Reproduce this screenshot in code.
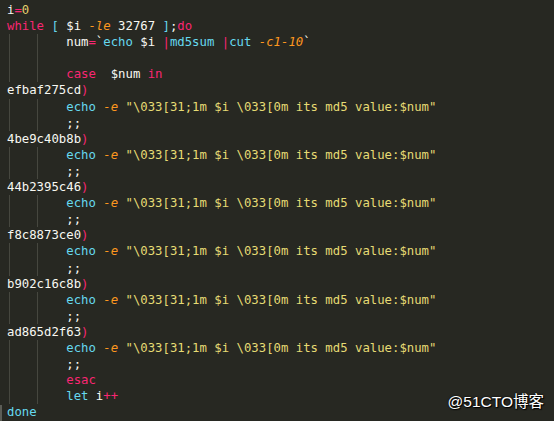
import React from "react";

type Tok = [string, string];

const W = "text-[#f8f8f2]";
const P = "text-[#f92672]";
const B = "text-[#66d9ef]";
const O = "text-[#fd971f] italic";
const Y = "text-[#e6db74]";
const N = "text-[#e2cf6e]";

const TAB = "        ";

const echoLine: Tok[] = [
  [TAB, W],
  ["echo", B],
  [" ", W],
  ["-e", O],
  [" ", W],
  ['"\\033[31;1m $i \\033[0m its md5 value:$num"', Y],
];

const caseLabel = (hash: string): Tok[] => [
  [hash, W],
  [")", P],
];

const semi: Tok[] = [[TAB + ";;", W]];

const lines: { toks: Tok[]; guide?: boolean; cursor?: boolean }[] = [
  { toks: [["i", W], ["=", P], ["0", N]] },
  {
    toks: [
      ["while", P],
      [" ", W],
      ["[", B],
      [" $i ", W],
      ["-le", O],
      [" 32767 ", W],
      ["]", B],
      [";", W],
      ["do", P],
    ],
  },
  {
    guide: true,
    toks: [
      [TAB + "num", W],
      ["=", P],
      ["`", W],
      ["echo", B],
      [" $i ", W],
      ["|", P],
      ["md5sum", B],
      [" ", W],
      ["|", P],
      ["cut", B],
      [" ", W],
      ["-c1-10", O],
      ["`", W],
    ],
  },
  { guide: true, toks: [["", W]] },
  { guide: true, toks: [[TAB, W], ["case", P], ["  $num ", W], ["in", P]] },
  { toks: caseLabel("efbaf275cd") },
  { guide: true, toks: echoLine },
  { guide: true, toks: semi },
  { toks: caseLabel("4be9c40b8b") },
  { guide: true, toks: echoLine },
  { guide: true, toks: semi },
  { toks: caseLabel("44b2395c46") },
  { guide: true, toks: echoLine },
  { guide: true, toks: semi },
  { toks: caseLabel("f8c8873ce0") },
  { guide: true, toks: echoLine },
  { guide: true, toks: semi },
  { toks: caseLabel("b902c16c8b") },
  { guide: true, toks: echoLine },
  { guide: true, toks: semi },
  { toks: caseLabel("ad865d2f63") },
  { guide: true, toks: echoLine },
  { guide: true, toks: semi },
  { guide: true, toks: [[TAB, W], ["esac", P]] },
  { guide: true, toks: [[TAB, W], ["let", B], [" i", W], ["++", P]] },
  { cursor: true, toks: [["done", B]] },
];

export default function App() {
  return (
    <div className="relative w-[554px] h-[421px] overflow-hidden bg-[#272822]">
      <div
        className="pt-[2px] pl-[7px] text-[12.3px] leading-[16.1px] whitespace-pre"
        style={{ fontFamily: '"DejaVu Sans Mono", monospace' }}
      >
        {lines.map((ln, i) => (
          <div key={i} className="relative h-[16.1px]">
            {ln.guide && (
              <>
                <span className="absolute left-[2px] top-0 h-full w-px bg-[#46473f]" />
                <span className="absolute left-[30px] top-0 h-full w-px bg-[#46473f]" />
              </>
            )}
            {ln.cursor && (
              <span className="absolute left-[-7px] top-[1px] h-[17px] w-[2px] bg-[#5c5d56]" />
            )}
            {ln.toks.map(([t, c], j) => (
              <span key={j} className={c}>
                {t}
              </span>
            ))}
          </div>
        ))}
      </div>

      {/* watermark */}
      <div
        className="absolute right-[10px] bottom-[8px] text-[15.5px] text-white [text-shadow:1px_1px_1px_#000,0_0_2px_#000]"
        style={{ fontFamily: '"Liberation Sans", "Noto Sans CJK SC", sans-serif' }}
      >
        @51CTO博客
      </div>
    </div>
  );
}
